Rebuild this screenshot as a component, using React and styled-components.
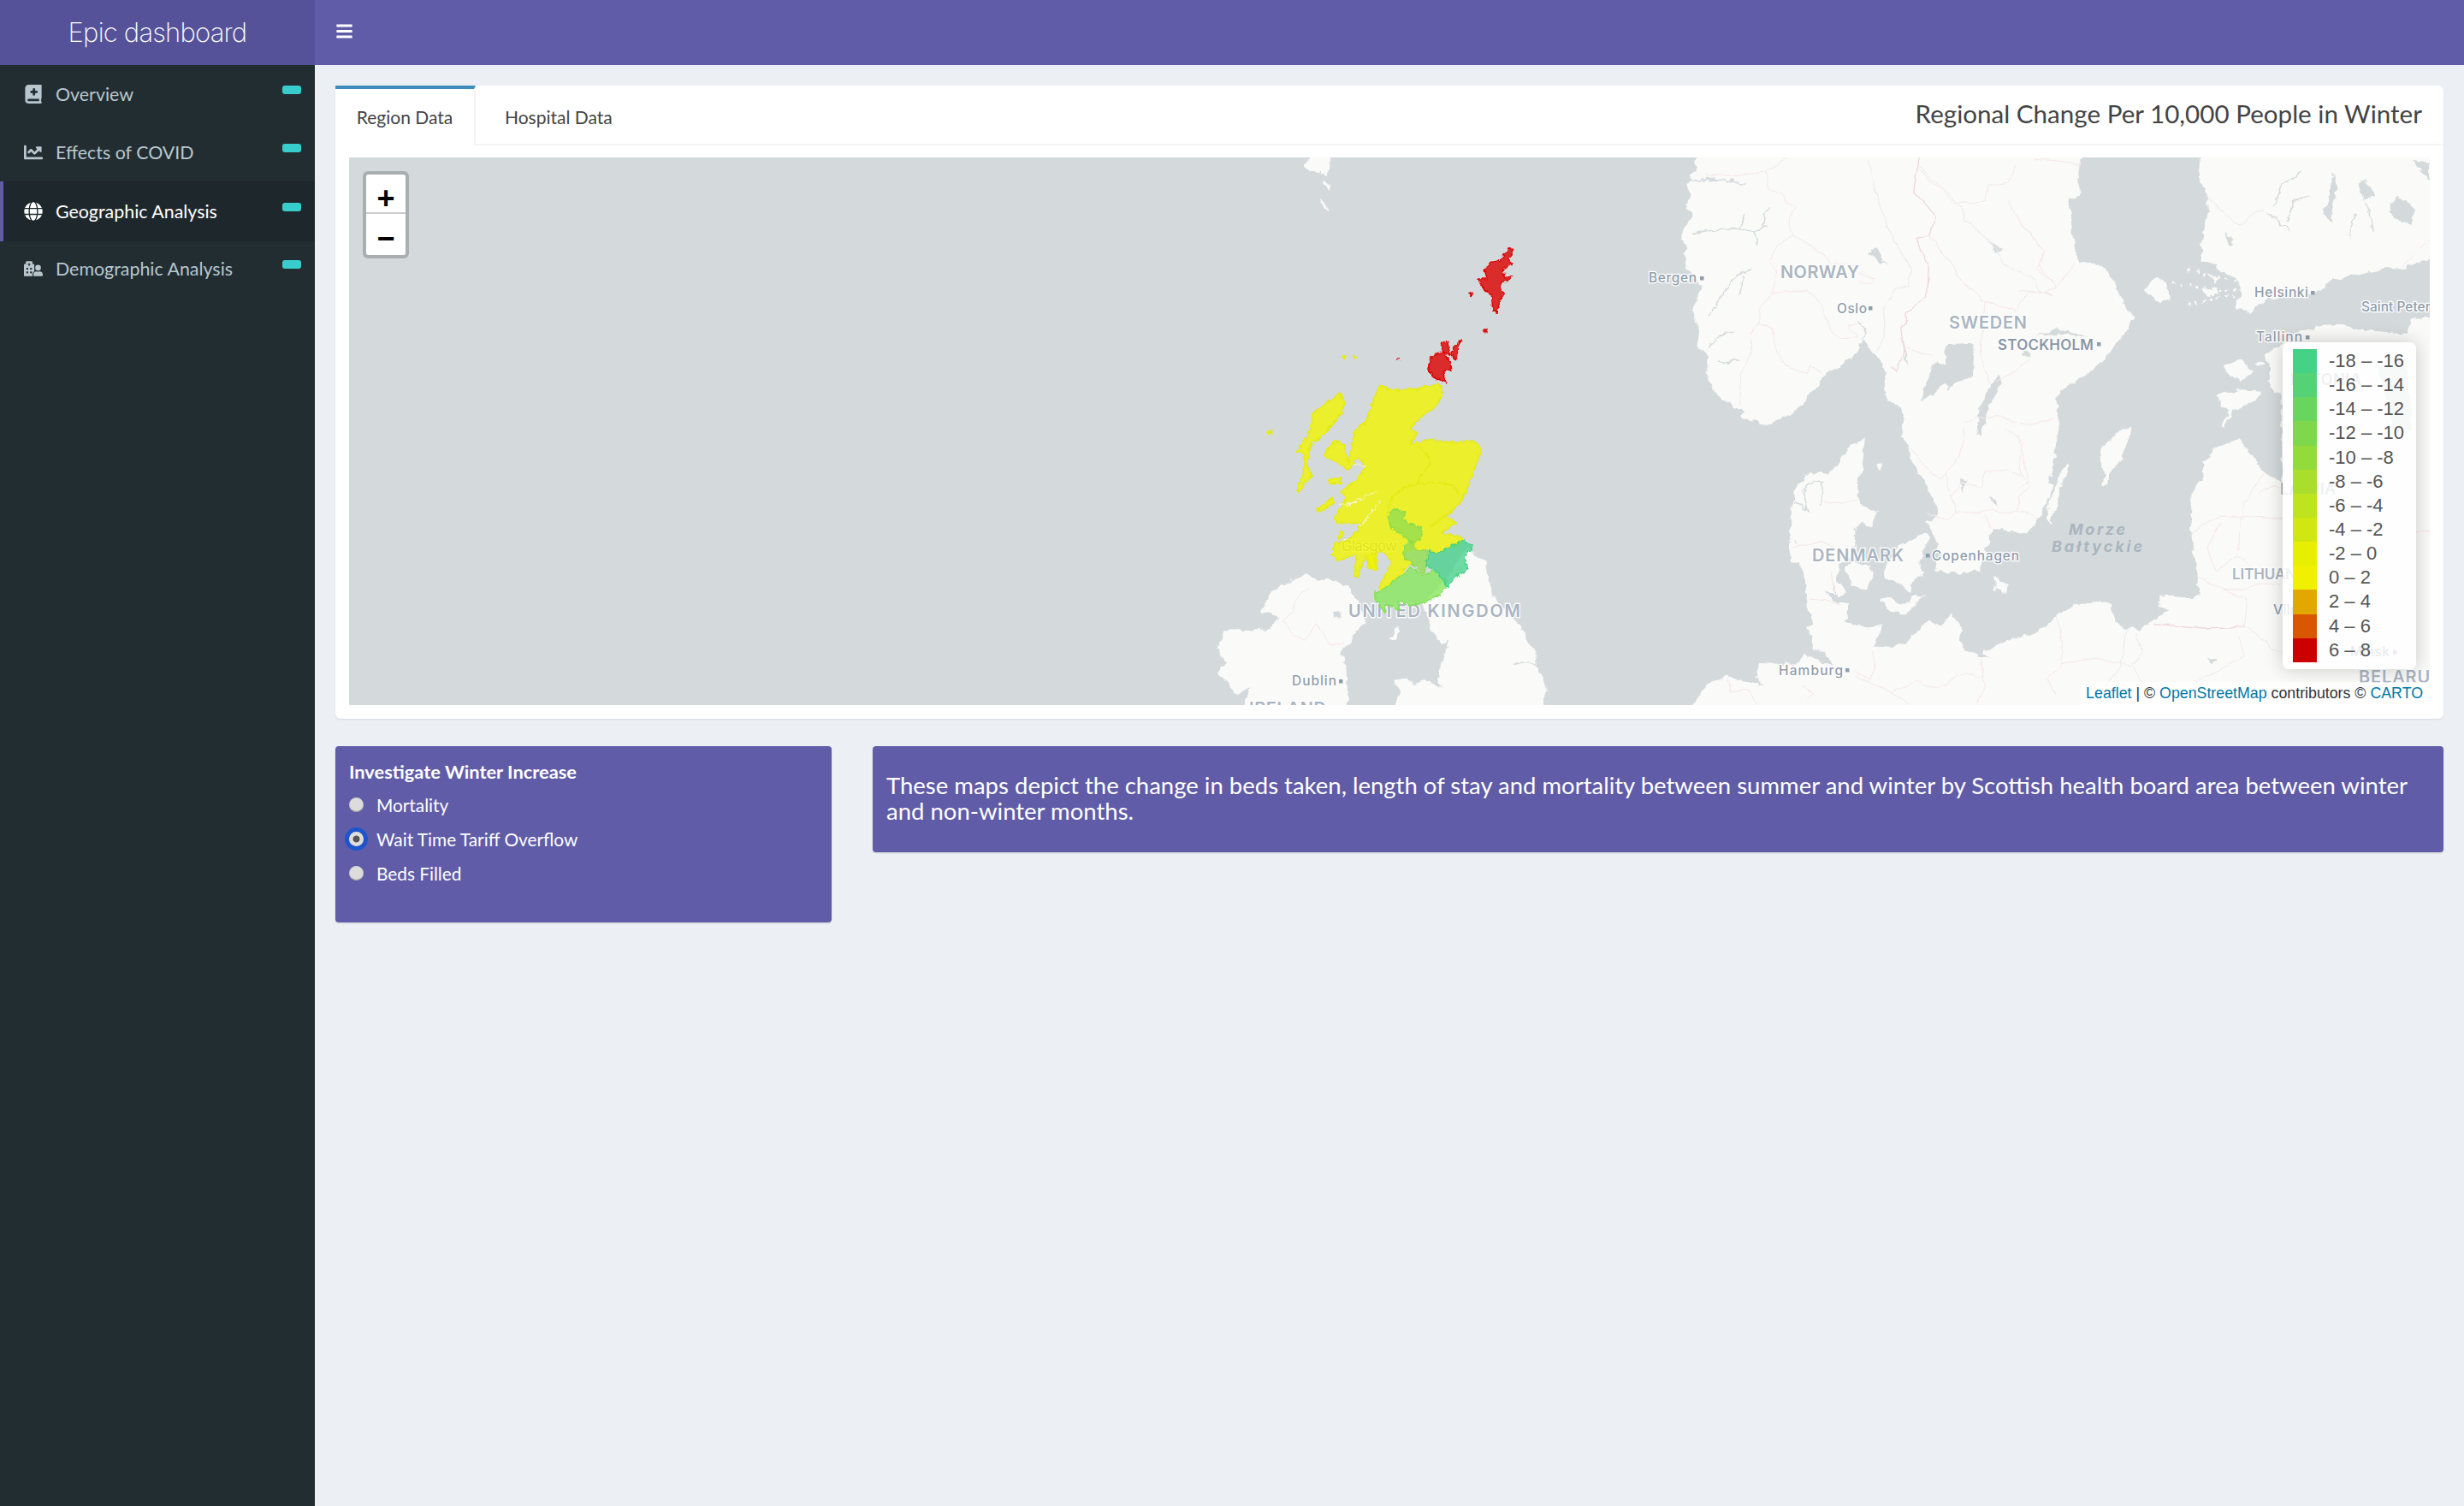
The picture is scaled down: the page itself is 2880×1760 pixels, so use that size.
import React from "react";
import styled, { createGlobalStyle } from "styled-components";
import { FaBars, FaBookMedical, FaChartLine, FaGlobe, FaHospitalUser } from "react-icons/fa";

const GlobalStyle = createGlobalStyle`
  html, body {
    margin: 0;
    background: #ecf0f5;
  }
  body {
    font-family: "Lato", "Open Sans", sans-serif;
    color: #333;
  }
`;

const WATER = "#d4dadc";
const LAND = "#fafaf8";

// every frame below is a zoomed crop of the map, the points are read off it
const frame = (ox, oy, sy = 3) => (flat) => {
  const out = [];
  for (let i = 0; i < flat.length; i += 2) out.push([ox + flat[i] / 3, oy + flat[i + 1] / sy]);
  return out;
};
const z2 = frame(1400, 260, 2.703);
const z5 = frame(2640, 390);
const z6 = frame(1900, 180);
const z7 = frame(2360, 180);
const z8 = frame(1900, 500);
const z9 = frame(2360, 500);
const z10 = frame(1500, 180);
const toPath = (pts, close = true) =>
  "M" + pts.map((p) => p[0].toFixed(1) + "," + p[1].toFixed(1)).join("L") + (close ? "Z" : "");

const landShapes = [
  // norway + sweden
  [
    ...z6([270,-20,240,30,250,60,230,70,235,90,212,115,225,150,215,190,235,220,210,260,195,290,215,320,205,350,215,400,240,420,270,470,245,510,240,570,255,620,250,680,285,700,295,740,285,790,310,830,350,870,410,900,410,930,490,945,560,925,620,880,665,825,700,780,760,730,800,720,835,650,860,690,890,720,910,770,915,860,960,880,980,920,965,990]),
    ...z8([990,60,1000,110,1040,180,1090,270,1095,300,1060,330,1090,400,1100,440,1090,500,1180,510,1240,500,1280,380,1290,355,1410,370,1440,340,1480,260,1500,200]),
    ...z9([100,170,115,170,130,50,140,0]),
    ...z7([130,850,160,820,240,770,300,720,375,620,400,570,370,530,330,450,300,400,270,385,210,380,190,310,180,220,175,160,215,140,205,90,220,-20]),
  ],
  // finland and north russia
  z7([640,-20,630,70,655,130,660,200,640,320,645,380,690,390,760,440,780,490,760,530,810,560,870,510,1030,490,1100,440,1200,420,1280,400,1350,400,1480,350,1480,-20]),
  // baltics, poland, germany, denmark
  [
    ...z7([1480,575,1370,570,1365,630,1230,620,1130,600,1090,600,980,620,900,680,870,700,880,760,870,800,920,860,920,990]),
    ...z9([925,190,860,160,830,110,770,40,680,70,650,120,640,180,605,225,600,300,605,380,612,440,630,520,625,590,580,595,530,590,490,590,490,630,530,640,480,670,420,710,370,700,340,680,320,620,260,610,190,625,120,665,70,715,0,735]),
    ...z8([1450,715,1350,740,1260,780,1250,790,1280,810,1200,790,1170,740,1185,710,1150,680,1110,690,1060,680,1000,735,940,770,870,770,890,725,900,690,870,700,800,690,770,680,780,650,780,620,720,600,700,570,750,590,780,580,740,530,750,480,770,470,810,440,800,350,830,330,860,350,880,295,820,270,810,200,830,150,835,90,840,40,780,70,745,130,700,160,630,165,590,230,575,290,580,400,575,470,610,480,630,540,635,600,640,650,660,690,630,700,660,740,650,770,700,790,725,830,620,790,610,830,470,825,455,870,480,900,360,870,280,900,250,960,200,1010]),
    [2870, 840],
  ],
  // danish, german and baltic islands
  z8([770,490,800,470,860,480,865,530,840,570,790,550]),
  z8([910,480,960,410,1055,370,1065,390,1030,470,1045,510,1005,550,1000,580,950,540,915,530]),
  z8([890,600,930,590,960,620,1000,600,1050,580,990,650,930,645]),
  z8([880,130,905,125,890,145]),
  z8([1295,525,1340,550,1335,580,1295,565]),
  z8([1120,680,1145,645,1185,710,1150,730]),
  z9([350,10,395,0,365,100,315,160,310,200,290,205,300,170,285,120,290,70]),
  z9([165,120,175,125,150,200,110,340,95,320,110,250]),
  z7([715,745,780,720,820,760,770,800,750,780]),
  z7([695,850,770,825,850,830,830,860,750,900,720,960,710,950,740,900,700,880]),
  z7([830,735,860,730,860,745,835,745]),
  // aland
  z7([440,475,480,435,520,460,530,500,500,520,460,500]),
  z7([640,480,690,470,700,490,660,495]),
  z7([660,420,700,440,690,455]),
  // faroes
  z10([100,-10,170,-10,155,85,130,60,85,60,75,40]),
  z10([135,95,160,110,160,130,140,110]),
  z10([128,155,145,170,158,208,140,190]),
  // ireland
  z2([380,1105,425,1130,480,1130,530,1150,580,1240,590,1265,560,1290,520,1340,500,1360,520,1400,530,1570,150,1570,180,1470,130,1490,75,1420,100,1390,65,1345,95,1290,150,1290,240,1285,290,1250,225,1225,260,1170,310,1140]),
  // england + wales
  z2([945,1030,1000,1060,1020,1130,1040,1190,1130,1270,1180,1360,1200,1420,1225,1480,1195,1570,670,1570,710,1480,680,1445,730,1440,760,1460,800,1450,860,1470,840,1440,850,1410,880,1320,860,1330,820,1290,790,1205,870,1130]),
  z2([665,1325,700,1275,715,1285,690,1320]),
];

const waterShapes = [
  z6([1120,670,1220,665,1215,770,1130,830,1120,800,1080,840,1035,865,1060,790,1090,725,1120,740]),
  z6([1310,775,1320,810,1280,870,1245,985,1230,985,1240,890,1280,810]),
  z6([1275,310,1330,330,1300,345]),
  z6([850,340,880,330,915,390,880,370]),
  z7([60,635,130,615,245,640,200,640,130,630]),
  z7([0,695,20,690,45,700,20,705]),
  z7([1065,190,1085,170,1100,60,1115,120,1090,240,1075,215]),
  z7([1190,100,1215,85,1245,150,1210,160]),
  z7([1295,175,1335,150,1390,195,1370,245,1315,225]),
  z7([725,280,745,290,750,320,735,315]),
  z7([1380,20,1440,30,1440,90]),
  z2([480,1228,498,1224,502,1248,484,1252]),
  z5([420,110,520,110,540,340,470,340,440,200]),
  z8([1282,240,1298,250,1303,272,1287,264]),
  z8([1180,180,1195,185,1180,235]),
  z9([665,810,695,810,680,825]),
];

const waterLines = [
  z6([230,280,320,265,400,265,450,270,500,255]),
  z6([400,265,420,210]),
  z6([450,270,465,320]),
  z6([480,260,490,200,510,190]),
  z6([225,95,320,90,420,100]),
  z6([290,570,340,490,390,425,440,405]),
  z6([400,495,410,430]),
  z6([290,680,320,640,380,620]),
  z6([320,730,400,725]),
  z6([835,650,840,620,810,590]),
  z6([970,640,985,740]),
  z7([890,180,920,110,990,60]),
  z7([870,210,950,270]),
  z7([940,240,960,170,1010,140]),
  z7([1160,290,1180,210]),
  z7([1220,170,1240,270]),
  z8([590,260,620,270,640,290,625,230,640,190,690,190,680,270]),
  z8([590,390,600,410]),
  z8([600,560,600,640]),
  z8([640,800,725,830]),
  z8([450,830,470,900]),
  z8([815,340,805,400,790,420]),
  z8([720,550,760,610]),
  z2([1110,1390,1160,1385,1200,1410]),
];

const softBorders = [
  z6([490,60,500,120,550,140,560,175,595,185,570,250,590,285,530,320,500,375,530,410,510,495,465,545,465,595,440,640,440,700,400,770,405,880]),
  z6([280,75,370,75,490,60,560,20]),
  z6([590,285,700,350,715,385,820,395]),
  z6([510,495,560,480,640,480,690,540,720,620,750,645,810,640,780,600,835,590]),
  z6([465,595,510,610,530,700,570,745,640,770,650,740,700,780]),
  z6([820,420,880,435,870,450,820,450]),
  z6([1030,50,1150,170,1260,165,1270,110,1340,100,1370,40]),
  z6([1340,170,1400,260,1470,340,1440,400,1500,450]),
  z6([1070,290,1130,370,1200,470,1260,520,1370,550,1410,480,1500,490]),
  z6([1260,520,1250,650,1240,700,1280,800]),
  z6([980,680,1080,710]),
  z6([1185,940,1230,920,1330,925,1420,950,1500,930]),
  z6([1420,720,1360,770,1300,800]),
  z7([0,235,90,340,70,390,130,470,70,490,0,480]),
  z7([130,470,200,380]),
  z7([60,15,220,35]),
  z7([1440,300,1340,400]),
  z8([1190,0,1170,100,1120,160,1100,180,1040,120,990,70]),
  z8([1120,160,1140,240,1160,300,1130,320,1060,300]),
  z8([1160,300,1260,290,1350,300,1390,290,1440,320]),
  z8([1140,240,1180,190,1240,210,1260,150,1340,150,1390,170,1415,200,1380,240,1370,290]),
  z8([1330,0,1395,50,1380,100,1390,170]),
  z8([1260,305,1280,360]),
  z8([580,420,650,410,690,395,730,420]),
  z8([640,600,700,605,760,620]),
  z8([700,260,760,270,810,250]),
  z8([720,500,730,570]),
  z8([1250,810,1260,900,1230,970]),
  z8([860,780,880,830,860,880,800,860]),
  z8([800,870,900,910,1000,970]),
  z8([930,930,1020,885,1090,915,1190,860,1250,880]),
  z8([360,880,370,930,430,920,465,970]),
  z8([620,910,660,930,640,945]),
  z9([130,660,150,760,150,840,100,880,130,940]),
  z9([150,830,250,810,360,820,400,840,420,880,440,900]),
  z9([605,370,700,310,790,310,920,320]),
  z9([790,700,800,600,720,570,630,525]),
  z9([720,570,780,570,860,540,920,550]),
  z9([705,330,660,420,690,500,770,450,870,530]),
  z9([775,310,770,430]),
  z9([800,700,870,750,880,780,920,780]),
  z9([770,730,790,800,700,850,600,890]),
  z9([860,160,790,260,790,310]),
  z9([0,30,30,180,0,210]),
  z2([385,1160,340,1190,330,1230,295,1260,330,1300,380,1320,420,1270,460,1330,510,1325]),
  z5([0,560,60,530,90,550]),
  z5([0,640,90,650]),
  z5([550,700,600,690]),
];

const strongBorders = [
  z6([1030,12,1010,130,1050,170,1090,220,1070,285,1020,295,1060,400,1055,500,985,550,985,590,965,605,975,700,950,760,935,740]),
  z9([470,685,640,705,790,700]),
];

const rivers = [
  z6([850,20,880,150,930,280,1000,400,990,470,950,470,905,540,910,640,880,690]),
  z6([1030,40,1180,190,1190,230,1280,310,1330,390,1440,440,1450,480,1500,490]),
  z7([660,155,750,240,775,250,830,200,860,195]),
  z9([380,700,360,830,310,900]),
  z9([410,720,430,780,400,830]),
];

// finnish and stockholm skerries
const skerries = [
  z7([540,450,640,470,770,480]),
  z7([590,410,680,430,770,450]),
  z7([590,530,700,500,760,500]),
  z7([300,650,340,620,385,590]),
  z7([200,790,260,740,320,690]),
];

const cityLabels = [
  { text: "Bergen", x: 1927, y: 330, w: 56, dot: [1987, 323] },
  { text: "Oslo", x: 2147, y: 366, w: 35, dot: [2184, 358] },
  { text: "Helsinki", x: 2635, y: 347, w: 63, dot: [2701, 340] },
  { text: "Saint Petersburg", x: 2760, y: 364 },
  { text: "Tallinn", x: 2637, y: 399, w: 54, dot: [2695, 392] },
  { text: "Copenhagen", x: 2258, y: 655, w: 102, dot: [2251, 647] },
  { text: "Hamburg", x: 2079, y: 789, w: 75, dot: [2157, 781] },
  { text: "Dublin", x: 1510, y: 801, w: 52, dot: [1565, 794] },
  { text: "Vilnius", x: 2657, y: 718, w: 52 },
  { text: "Minsk", x: 2747, y: 767, w: 46, dot: [2797, 760] },
];

const countryLabels = [
  { text: "NORWAY", x: 2081, y: 325, w: 92 },
  { text: "SWEDEN", x: 2278, y: 384, w: 91 },
  { text: "DENMARK", x: 2118, y: 656, w: 107 },
  { text: "LITHUANIA", x: 2609, y: 677, w: 92, size: 17 },
  { text: "ESTONIA", x: 2677, y: 450, w: 83, size: 18 },
  { text: "LATVIA", x: 2665, y: 578, w: 65, size: 18 },
  { text: "BELARUS", x: 2757, y: 798, w: 97 },
  { text: "IRELAND", x: 1460, y: 835, w: 90 },
  { text: "UNITED KINGDOM", x: 1576, y: 721, w: 201 },
];

const regions = [
  {
    fill: "#f0f400",
    line: "#e6ea10",
    shapes: [
      z2([640,515,680,530,760,525,850,510,858,545,835,580,790,610,745,650,770,665,745,700,815,685,890,695,975,690,995,725,970,780,950,830,935,860,915,890,885,915,870,925,905,950,880,965,850,985,880,985,925,995,925,1015,880,1030,845,1045,810,1035,770,1035,760,1020,720,1050,750,1075,700,1120,640,1165,635,1150,680,1070,650,1040,630,1040,625,1095,595,1090,590,1050,560,1120,550,1120,555,1050,520,1060,490,1070,470,1050,480,1015,530,1000,560,975,575,950,490,950,480,935,500,905,520,870,500,850,560,810,590,770,560,740,530,780,490,760,440,735,480,690,510,700,530,760,550,660,590,630,605,590,625,540]),
      z2([500,540,515,570,505,600,470,640,430,680,395,700,385,770,400,800,370,830,350,855,350,835,370,790,375,730,345,725,390,670,405,600,450,570]),
      z2([420,905,470,870,480,885,445,905,430,918]),
      z2([238,665,262,655,250,672]),
      z2([500,975,515,985,495,1000]),
      z2([595,1060,615,1040,630,1095,610,1095]),
      z2([455,815,500,805,505,825,470,825]),
      z2([508,425,516,425,512,432]),
      z2([546,420,556,426,548,428]),
    ],
  },
  {
    fill: "#93de50",
    line: "#8fdc4c",
    shapes: [
      z2([665,925,690,905,725,915,720,940,780,965,785,995,760,1015,730,995,680,965]),
      z2([720,1040,740,1000,765,1035,810,1040,800,1090,790,1110,750,1075,725,1060]),
    ],
  },
  {
    fill: "#88e75e",
    line: "#7fe24f",
    shapes: [
      z2([640,1165,700,1125,750,1090,790,1115,825,1100,875,1130,870,1155,840,1180,780,1205,745,1210,705,1195,705,1225,660,1205,655,1235,625,1190,618,1168]),
    ],
  },
  {
    fill: "#4bd28f",
    line: "#45d186",
    shapes: [
      z2([810,1040,845,1045,880,1025,930,1005,965,1022,935,1060,945,1100,900,1120,875,1150,835,1100,800,1085]),
    ],
  },
  {
    fill: "#dd0000",
    line: "#dd0000",
    shapes: [
      z2([820,420,860,410,885,440,890,465,860,470,870,505,830,490,810,465]),
      z2([850,380,875,375,885,420,860,410]),
      z2([895,395,925,370,910,410,905,435,890,420]),
      z2([1090,80,1105,85,1090,125,1105,130,1070,145,1075,175,1105,170,1095,180,1065,190,1060,205,1075,225,1055,250,1050,285,1035,280,1030,225,1005,215,995,195,980,178,1015,178,1005,150,1030,125,1060,120,1075,105]),
      z2([952,222,962,225,960,232]),
      z2([1005,338,1011,338,1011,348,1005,348]),
      z2([702,429,708,429,708,432,702,432]),
    ],
  },
];

const boardLines = [
  z2([775,705,810,740,810,770,775,810,770,825,720,840,680,870,670,900,665,920]),
  z2([770,825,860,825,895,830,915,860]),
  z2([815,960,890,915]),
];

const westCoastLochs = [
  z2([590,770,540,760]),
  z2([625,850,520,895]),
  z2([570,960,640,880]),
  z2([560,885,500,890]),
];

const legendRows = [
  ["#45d186", "-18 – -16"],
  ["#55d276", "-16 – -14"],
  ["#68d55f", "-14 – -12"],
  ["#7fd84b", "-12 – -10"],
  ["#93da3b", "-10 – -8"],
  ["#a9de2d", "-8 – -6"],
  ["#bee41f", "-6 – -4"],
  ["#d1e712", "-4 – -2"],
  ["#e8ee00", "-2 – 0"],
  ["#f0f000", "0 – 2"],
  ["#e3a800", "2 – 4"],
  ["#d95700", "4 – 6"],
  ["#cc0000", "6 – 8"],
];

const Shell = styled.div`
  display: grid;
  grid-template-columns: 368px 1fr;
  grid-template-rows: 76px 1fr;
  min-height: 1760px;
`;

const Brand = styled.div`
  background: #555299;
  color: #fff;
  display: flex;
  align-items: center;
  justify-content: center;
  padding-bottom: 2px;
  box-sizing: border-box;
  font-family: "Inter", "Liberation Sans", sans-serif;
  font-size: 31px;
  font-weight: 200;
  letter-spacing: -0.8px;
`;

const TopBar = styled.div`
  background: #605ca8;
  color: #fff;
  display: flex;
  align-items: center;
  padding-left: 24px;
  padding-bottom: 3px;
  font-size: 21px;
`;

const Sidebar = styled.nav`
  background: #222d32;
`;

const NavRow = styled.div`
  height: ${({ $active }) => ($active ? "70px" : "68px")};
  margin-bottom: ${({ $active }) => ($active ? "-2px" : "0")};
  box-sizing: border-box;
  display: flex;
  align-items: center;
  padding: 0 16px 0 ${({ $active }) => ($active ? "24px" : "28px")};
  color: ${({ $active }) => ($active ? "#fff" : "#b8c7ce")};
  background: ${({ $active }) => ($active ? "#1e282c" : "transparent")};
  border-left: ${({ $active }) => ($active ? "4px solid #605ca8" : "0")};
  font-size: 21.4px;
`;

const NavIcon = styled.span`
  width: 37px;
  flex: none;
  display: flex;
  align-items: center;
  font-size: 22px;
`;

const NavBadge = styled.span`
  width: 22px;
  height: 10px;
  margin-left: auto;
  margin-top: -10px;
  border-radius: 3px;
  background: #39cccc;
`;

const Content = styled.main`
  padding: 24px 24px 0;
  min-width: 0;
`;

const Card = styled.section`
  background: #fff;
  border-radius: 6px;
  box-shadow: 0 1px 2px rgba(0, 0, 0, 0.1);
  padding-bottom: 16px;
`;

const TabBar = styled.div`
  display: flex;
  height: 70px;
  box-sizing: border-box;
  border-bottom: 2px solid #f4f4f4;
`;

const Tab = styled.div`
  box-sizing: border-box;
  height: ${({ $active }) => ($active ? "70px" : "68px")};
  padding: 0 34px ${({ $active }) => ($active ? "2px" : "0")};
  width: ${({ $active }) => ($active ? "164px" : "auto")};
  display: flex;
  align-items: center;
  justify-content: center;
  white-space: nowrap;
  font-size: 21px;
  color: #444;
  background: #fff;
  border-top: 4px solid ${({ $active }) => ($active ? "#3c8dbc" : "transparent")};
  border-right: ${({ $active }) => ($active ? "2px solid #f4f4f4" : "0")};
`;

const TabTitle = styled.h2`
  margin: 0 25px 0 auto;
  align-self: center;
  font-size: 29.6px;
  font-weight: 400;
  color: #444;
  padding-bottom: 3px;
`;

const MapFrame = styled.div`
  position: relative;
  height: 640px;
  margin: 14px 16px 0;
  background: ${WATER};
  overflow: hidden;
`;

const MapArt = styled.svg`
  display: block;
  width: 100%;
  height: 100%;
  font-family: "Inter", "Open Sans", sans-serif;
`;

const ZoomControl = styled.div`
  position: absolute;
  top: 16px;
  left: 16px;
  width: 46px;
  border: 4px solid rgba(0, 0, 0, 0.2);
  border-radius: 6px;
  background-clip: padding-box;
`;

const ZoomButton = styled.div`
  height: ${({ $last }) => ($last ? "48px" : "46px")};
  box-sizing: border-box;
  padding-top: ${({ $last }) => ($last ? "14px" : "16px")};
  display: flex;
  align-items: center;
  justify-content: center;
  background: #fff;
  color: #000;
  font-family: "Liberation Mono", monospace;
  font-size: 36px;
  font-weight: 700;
  border-bottom: ${({ $last }) => ($last ? "0" : "2px solid #ccc")};
  border-radius: ${({ $last }) => ($last ? "0 0 3px 3px" : "3px 3px 0 0")};
`;

const Legend = styled.div`
  position: absolute;
  top: 216px;
  right: 16px;
  box-sizing: border-box;
  width: 156px;
  padding: 8px 12px;
  border-radius: 7px;
  background: rgba(255, 255, 255, 0.8);
  box-shadow: 0 0 22px rgba(0, 0, 0, 0.2);
`;

const LegendRow = styled.div`
  display: flex;
  align-items: center;
  height: 28.15px;
  font-family: "Liberation Sans", Arial, sans-serif;
  font-size: 22px;
  color: #555;
  white-space: nowrap;
`;

const LegendSwatch = styled.i`
  width: 28px;
  height: 100%;
  margin-right: 14px;
  flex: none;
  background: ${({ $color }) => $color};
`;

const Attribution = styled.div`
  position: absolute;
  right: 0;
  bottom: 0;
  height: 27px;
  padding: 0 8px 0 6px;
  display: flex;
  align-items: center;
  background: rgba(255, 255, 255, 0.7);
  font-family: "Liberation Sans", Arial, sans-serif;
  font-size: 17.8px;
  color: #333;
  white-space: pre;
`;

const AttrLink = styled.span`
  color: #0078a8;
`;

const LowerRow = styled.div`
  display: grid;
  grid-template-columns: 580px 1fr;
  gap: 48px;
  align-items: start;
  margin-top: 32px;
`;

const PurplePanel = styled.div`
  background: #605ca8;
  color: #fff;
  border-radius: 4px;
  box-shadow: 0 1px 2px rgba(0, 0, 0, 0.15);
  box-sizing: border-box;
`;

const ControlPanel = styled(PurplePanel)`
  height: 206px;
  padding: 17px 16px;
`;

const ControlTitle = styled.div`
  font-size: 21.8px;
  font-weight: 700;
  line-height: 26px;
  margin-bottom: 5px;
`;

const RadioRow = styled.label`
  display: flex;
  align-items: center;
  gap: 15px;
  height: 40px;
  font-size: 20.8px;
`;

const Radio = styled.input`
  appearance: none;
  margin: 0;
  width: 17px;
  height: 17px;
  border-radius: 50%;
  flex: none;
  background: radial-gradient(circle, #dcdcdc 0 55%, #bdbdbd 100%);
  box-shadow: inset 0 -1px 0 #999;

  &:checked {
    background: radial-gradient(circle, #555 0 30%, #dedede 36% 70%, #aaa 100%);
    box-shadow: 0 0 0 5px #1d55cc;
  }
`;

const InfoPanel = styled(PurplePanel)`
  height: 124px;
  padding: 31px 16px 0;
  font-size: 27.5px;
  line-height: 30px;
  white-space: nowrap;
`;

const MapView = () => (
  <MapFrame>
    <MapArt viewBox="408 184 2432 640" preserveAspectRatio="none">
      <defs>
        <filter id="coast" filterUnits="userSpaceOnUse" x="400" y="170" width="2460" height="670">
          <feTurbulence type="fractalNoise" baseFrequency="0.09" numOctaves="3" seed="4" result="noise" />
          <feDisplacementMap in="SourceGraphic" in2="noise" scale="9" xChannelSelector="R" yChannelSelector="G" />
          <feGaussianBlur stdDeviation="0.45" />
        </filter>
        <filter id="wiggle" filterUnits="userSpaceOnUse" x="400" y="170" width="2460" height="670">
          <feTurbulence type="fractalNoise" baseFrequency="0.05" numOctaves="2" seed="12" result="noise" />
          <feDisplacementMap in="SourceGraphic" in2="noise" scale="8" xChannelSelector="R" yChannelSelector="G" />
        </filter>
        <filter id="shore" filterUnits="userSpaceOnUse" x="1400" y="260" width="500" height="600">
          <feTurbulence type="fractalNoise" baseFrequency="0.22" numOctaves="2" seed="9" result="noise" />
          <feDisplacementMap in="SourceGraphic" in2="noise" scale="6" xChannelSelector="R" yChannelSelector="G" />
          <feGaussianBlur stdDeviation="0.3" />
        </filter>
      </defs>

      <g filter="url(#coast)">
        {landShapes.map((pts, i) => (
          <path key={i} d={toPath(pts)} fill={LAND} />
        ))}
        {waterShapes.map((pts, i) => (
          <path key={i} d={toPath(pts)} fill={WATER} />
        ))}
        {waterLines.map((pts, i) => (
          <path key={i} d={toPath(pts, false)} fill="none" stroke={WATER} strokeWidth="1.5" strokeLinejoin="round" />
        ))}
        {skerries.map((pts, i) => (
          <path key={i} d={toPath(pts, false)} fill="none" stroke={LAND} strokeWidth="3" strokeDasharray="3 6" />
        ))}
      </g>
      <g filter="url(#wiggle)">
        {rivers.map((pts, i) => (
          <path key={i} d={toPath(pts, false)} fill="none" stroke="#e6eaec" strokeWidth="1" />
        ))}
        {softBorders.map((pts, i) => (
          <path key={i} d={toPath(pts, false)} fill="none" stroke="#f5e6e8" strokeWidth="1" />
        ))}
        {strongBorders.map((pts, i) => (
          <path key={i} d={toPath(pts, false)} fill="none" stroke="#f0d6da" strokeWidth="1.3" />
        ))}
      </g>

      <g fill="#aab5c1" fontSize="20" fontWeight="600" stroke="#fff" strokeWidth="2.5" paintOrder="stroke">
        {countryLabels.map((c) => (
          <text key={c.text} x={c.x} y={c.y} fontSize={c.size} textLength={c.w} lengthAdjust="spacing">
            {c.text}
          </text>
        ))}
      </g>
      <g fill="#8f9dac" fontSize="15.5" fontWeight="500" stroke="#fff" strokeWidth="2.5" paintOrder="stroke">
        {cityLabels.map((c) => (
          <text key={c.text} x={c.x} y={c.y} textLength={c.w} lengthAdjust="spacing">
            {c.text}
          </text>
        ))}
      </g>
      <g fill="#8f9dac">
        {cityLabels
          .filter((c) => c.dot)
          .map((c) => (
            <rect key={c.text} x={c.dot[0]} y={c.dot[1]} width="4.5" height="4.5" />
          ))}
        <rect x="2451" y="400" width="4.5" height="4.5" />
      </g>
      <text x="2335" y="409" textLength="112" lengthAdjust="spacing" fill="#8996a6" fontSize="17" fontWeight="600" stroke="#fff" strokeWidth="2.5" paintOrder="stroke">
        STOCKHOLM
      </text>
      <g fill="#aab5bf" fontSize="18" fontWeight="700" fontStyle="italic">
        <text x="2418" y="625" textLength="66" lengthAdjust="spacing">Morze</text>
        <text x="2398" y="645" textLength="106" lengthAdjust="spacing">Bałtyckie</text>
      </g>
      <text x="1568" y="644" textLength="65" lengthAdjust="spacing" fill="#8f9dac" fontSize="17" stroke="#fff" strokeWidth="2.5" paintOrder="stroke">
        Glasgow
      </text>

      <g filter="url(#shore)">
        {regions.map((r) => (
          <g key={r.fill} fill={r.fill} fillOpacity="0.8" stroke={r.line} strokeWidth="1.4" strokeLinejoin="round">
            {r.shapes.map((pts, i) => (
              <path key={i} d={toPath(pts)} />
            ))}
          </g>
        ))}
        {boardLines.map((pts, i) => (
          <path key={i} d={toPath(pts, false)} fill="none" stroke="#e6ea10" strokeWidth="1.8" />
        ))}
        {westCoastLochs.map((pts, i) => (
          <path key={i} d={toPath(pts, false)} fill="none" stroke="#f4f7c8" strokeWidth="1.2" />
        ))}
      </g>
    </MapArt>

    <ZoomControl>
      <ZoomButton>+</ZoomButton>
      <ZoomButton $last>−</ZoomButton>
    </ZoomControl>

    <Legend>
      {legendRows.map(([color, label]) => (
        <LegendRow key={label}>
          <LegendSwatch $color={color} />
          {label}
        </LegendRow>
      ))}
    </Legend>

    <Attribution>
      <AttrLink>Leaflet</AttrLink>
      {" | © "}
      <AttrLink>OpenStreetMap</AttrLink>
      {" contributors © "}
      <AttrLink>CARTO</AttrLink>
    </Attribution>
  </MapFrame>
);

const navItems = [
  { label: "Overview", icon: <FaBookMedical /> },
  { label: "Effects of COVID", icon: <FaChartLine /> },
  { label: "Geographic Analysis", icon: <FaGlobe />, active: true },
  { label: "Demographic Analysis", icon: <FaHospitalUser /> },
];

export default function App() {
  return (
    <Shell>
      <GlobalStyle />
      <Brand>Epic dashboard</Brand>
      <TopBar>
        <FaBars />
      </TopBar>
      <Sidebar>
        {navItems.map((item) => (
          <NavRow key={item.label} $active={item.active}>
            <NavIcon>{item.icon}</NavIcon>
            {item.label}
            <NavBadge />
          </NavRow>
        ))}
      </Sidebar>
      <Content>
        <Card>
          <TabBar>
            <Tab $active>Region Data</Tab>
            <Tab>Hospital Data</Tab>
            <TabTitle>Regional Change Per 10,000 People in Winter</TabTitle>
          </TabBar>
          <MapView />
        </Card>
        <LowerRow>
          <ControlPanel>
            <ControlTitle>Investigate Winter Increase</ControlTitle>
            <RadioRow>
              <Radio type="radio" name="measure" />
              Mortality
            </RadioRow>
            <RadioRow>
              <Radio type="radio" name="measure" defaultChecked />
              Wait Time Tariff Overflow
            </RadioRow>
            <RadioRow>
              <Radio type="radio" name="measure" />
              Beds Filled
            </RadioRow>
          </ControlPanel>
          <InfoPanel>
            These maps depict the change in beds taken, length of stay and mortality between summer and winter by Scottish health board area between winter
            <br />
            and non-winter months.
          </InfoPanel>
        </LowerRow>
      </Content>
    </Shell>
  );
}
